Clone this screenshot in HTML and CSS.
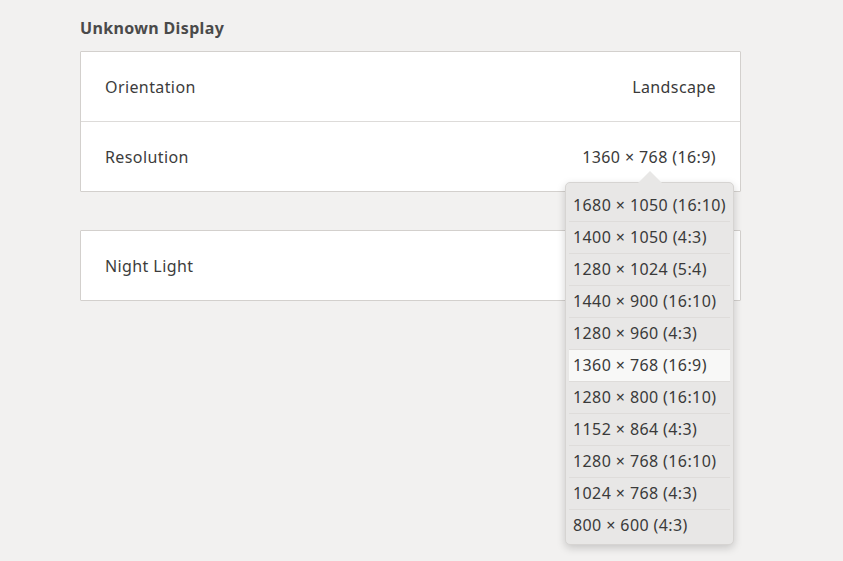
FILE: index.html
```html
<!DOCTYPE html>
<html>
<head>
<meta charset="utf-8">
<link rel="stylesheet" href="styles.css">
</head>
<body>
<div class="page">
  <h2 class="heading">Unknown Display</h2>
  <div class="card">
    <div class="row"><span class="label">Orientation</span><span class="value">Landscape</span></div>
    <div class="row"><span class="label">Resolution</span><span class="value">1360 × 768 (16:9)</span></div>
  </div>
  <div class="card card-2">
    <div class="row"><span class="label">Night Light</span></div>
  </div>
  <div class="popover">
    <div class="arrow"></div>
    <div class="item">1680 × 1050 (16:10)</div>
    <div class="item">1400 × 1050 (4:3)</div>
    <div class="item">1280 × 1024 (5:4)</div>
    <div class="item">1440 × 900 (16:10)</div>
    <div class="item">1280 × 960 (4:3)</div>
    <div class="item selected">1360 × 768 (16:9)</div>
    <div class="item">1280 × 800 (16:10)</div>
    <div class="item">1152 × 864 (4:3)</div>
    <div class="item">1280 × 768 (16:10)</div>
    <div class="item">1024 × 768 (4:3)</div>
    <div class="item last">800 × 600 (4:3)</div>
  </div>
</div>
</body>
</html>
```
FILE: styles.css
```css
html, body {
  margin: 0;
  padding: 0;
  background: #f2f1f0;
  font-family: "Noto Sans", "DejaVu Sans", sans-serif;
  color: #3c3c3c;
}
.page {
  position: relative;
  width: 843px;
  height: 561px;
  padding: 18px 0 0 80px;
  box-sizing: border-box;
}
.heading {
  margin: 0 0 12px 0;
  font-size: 16px;
  line-height: 21px;
  font-weight: bold;
  letter-spacing: 0.35px;
  color: #4a4a4a;
}
.card {
  width: 661px;
  box-sizing: border-box;
  background: #ffffff;
  border: 1px solid #d3d0cd;
  border-radius: 1px;
}
.card-2 {
  margin-top: 38px;
}
.row {
  height: 69px;
  display: flex;
  align-items: center;
  justify-content: space-between;
  padding: 0 24px;
  font-size: 16px;
  letter-spacing: 0.4px;
  border-top: 1px solid #dddbd9;
}
.row:first-child {
  border-top: none;
}
.value {
  color: #3a3a3a;
}
.popover {
  position: absolute;
  left: 565px;
  top: 182px;
  width: 169px;
  box-sizing: border-box;
  padding: 7px 3px 3px 3px;
  background: #e8e7e6;
  border: 1px solid #d6d4d2;
  border-radius: 5px;
  box-shadow: 0 3px 8px rgba(0,0,0,0.18);
}
.arrow {
  position: absolute;
  left: 72px;
  top: -12px;
  width: 0;
  height: 0;
  border-left: 12px solid transparent;
  border-right: 12px solid transparent;
  border-bottom: 12px solid #e8e7e6;
}
.item {
  height: 31px;
  line-height: 31px;
  border-bottom: 1px solid #dedcda;
  padding-left: 4px;
  font-size: 16px;
  letter-spacing: 0.4px;
  color: #3a3a3a;
  white-space: nowrap;
}
.item.last {
  border-bottom: none;
}
.item.selected {
  background: #f8f8f7;
}
```
